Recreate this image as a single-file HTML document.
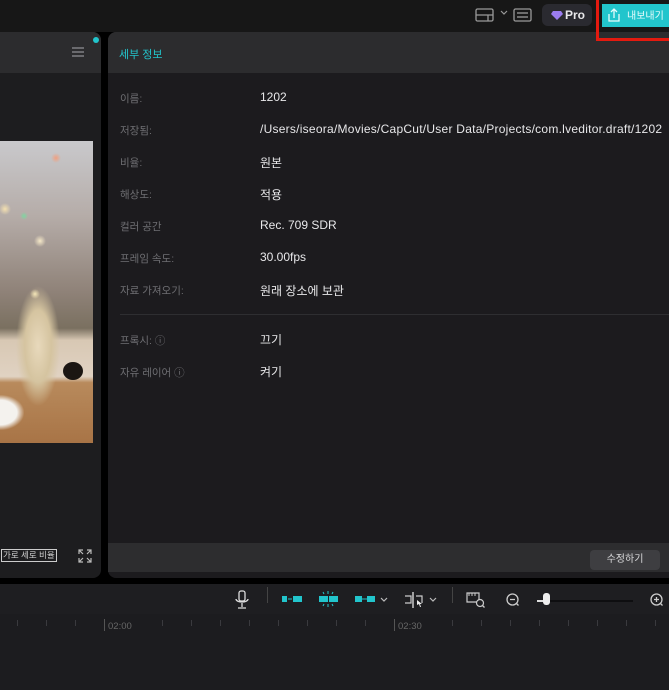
<!DOCTYPE html>
<html><head><meta charset="utf-8"><style>
*{margin:0;padding:0;box-sizing:border-box}
body{width:669px;height:690px;background:#000;position:relative;overflow:hidden;font-family:"Liberation Sans","Noto Sans CJK KR",sans-serif}
.abs{position:absolute}
.lbl{position:absolute;left:120px;font-size:10.5px;color:#6e6e72}
.val{position:absolute;left:260px;font-size:12px;color:#e8e8ea}
.tick{position:absolute;top:620px;width:1px;height:6px;background:#3a3a3e}
</style></head><body>
<!-- top bar -->
<div class="abs" style="left:0;top:0;width:669px;height:32px;background:#171717"></div>
<svg class="abs" style="left:475px;top:8px" width="20" height="15"><rect x="1" y="1" width="17" height="12" rx="1.5" fill="none" stroke="#9a9a9a" stroke-width="1.3"/><line x1="1" y1="7" x2="18" y2="7" stroke="#9a9a9a" stroke-width="1.3"/><line x1="13" y1="7" x2="13" y2="13" stroke="#9a9a9a" stroke-width="1.3"/></svg>
<svg class="abs" style="left:500px;top:10px" width="8" height="6"><path d="M1 1l3 3 3-3" fill="none" stroke="#999" stroke-width="1.2"/></svg>
<svg class="abs" style="left:513px;top:8px" width="20" height="15"><rect x="1" y="1" width="17" height="12" rx="1.5" fill="none" stroke="#9a9a9a" stroke-width="1.3"/><line x1="4" y1="5" x2="15" y2="5" stroke="#9a9a9a" stroke-width="1.3"/><line x1="4" y1="9" x2="15" y2="9" stroke="#9a9a9a" stroke-width="1.3"/></svg>
<div class="abs" style="left:542px;top:4px;width:50px;height:22px;border-radius:6px;background:#2a2a30;color:#e8e8ea;font-size:12px;font-weight:bold;line-height:22px;padding-left:23px">Pro</div>
<svg class="abs" style="left:551px;top:11px" width="12" height="9"><path d="M2 0h8l2 3-6 6-6-6z" fill="#9b7cf0"/></svg>
<div class="abs" style="left:599px;top:3px;width:70px;height:34px;background:#171717"></div>
<div class="abs" style="left:602px;top:4px;width:67px;height:23px;background:#22c5cc"></div>
<svg class="abs" style="left:606px;top:7px" width="16" height="16"><path d="M3 7v7h10V7M8 11V2M5 5l3-3 3 3" fill="none" stroke="#e8fcfc" stroke-width="1.3"/></svg>
<div class="abs" style="left:627px;top:7px;font-size:10px;color:#e8fcfc">내보내기</div>
<!-- left panel -->
<div class="abs" style="left:0;top:32px;width:101px;height:546px;background:#1d1d1f;border-radius:0 8px 8px 0;overflow:hidden">
 <div style="height:41px;background:#2c2c2e"></div>
</div>
<div class="abs" style="left:72px;top:47px;width:12px;height:1.5px;background:#6a6a6e;box-shadow:0 4px 0 #6a6a6e,0 8px 0 #6a6a6e"></div>
<div class="abs" style="left:93px;top:37px;width:6px;height:6px;border-radius:50%;background:#22c5cc"></div>
<div class="abs" style="left:0;top:141px;width:93px;height:302px;background:
radial-gradient(circle at 40px 100px,#f5e8c8 0,transparent 6px),
radial-gradient(circle at 56px 17px,#f0a080 0,transparent 5px),
radial-gradient(circle at 5px 68px,#f4e0b0 0,transparent 6px),
radial-gradient(circle at 24px 75px,#7fd6a0 0,transparent 4px),
radial-gradient(circle at 35px 153px,#f4e6b8 0,transparent 5px),
radial-gradient(ellipse 22px 60px at 38px 205px,#e8d9bc 0,#d5c4a0 60%,transparent 100%),
linear-gradient(180deg,#c9c9cc 0,#b5aca8 25%,#8f8278 50%,#7a7060 62%,#d8c8b4 66%,#e0d2c2 78%,#b88a5c 80%,#a87446 100%)"></div>
<div class="abs" style="left:0;top:395px;width:24px;height:35px;background:radial-gradient(ellipse at 0 50%,#f4f2ee 50%,transparent 72%)"></div>
<div class="abs" style="left:63px;top:362px;width:20px;height:18px;border-radius:50%;background:#1b1612"></div>
<div class="abs" style="left:1px;top:549px;font-size:8.5px;color:#ccc;border:1px solid #ccc;padding:0 1px;line-height:11px">가로 세로 비율</div>
<svg class="abs" style="left:78px;top:549px" width="14" height="14"><path d="M1 5V1h4M9 1h4v4M13 9v4H9M5 13H1V9M1 1l4 4M13 1L9 5M13 13L9 9M1 13l4-4" fill="none" stroke="#bbb" stroke-width="1.2"/></svg>
<!-- right panel -->
<div class="abs" style="left:108px;top:32px;width:561px;height:546px;background:#1c1b1e;border-radius:8px 0 0 8px;overflow:hidden">
 <div style="height:41px;background:#2c2c2e"></div>
</div>
<div class="abs" style="left:119px;top:46px;font-size:11px;color:#22c5cc">세부 정보</div>
<div class="lbl" style="top:91px">이름:</div><div class="val" style="top:90px">1202</div>
<div class="lbl" style="top:123px">저장됨:</div><div class="val" style="top:122px;letter-spacing:0.25px">/Users/iseora/Movies/CapCut/User Data/Projects/com.lveditor.draft/1202</div>
<div class="lbl" style="top:155px">비율:</div><div class="val" style="top:154px">원본</div>
<div class="lbl" style="top:187px">해상도:</div><div class="val" style="top:186px">적용</div>
<div class="lbl" style="top:219px">컬러 공간</div><div class="val" style="top:218px">Rec. 709 SDR</div>
<div class="lbl" style="top:251px">프레임 속도:</div><div class="val" style="top:250px">30.00fps</div>
<div class="lbl" style="top:283px">자료 가져오기:</div><div class="val" style="top:282px">원래 장소에 보관</div>
<div class="abs" style="left:120px;top:314px;width:549px;height:1px;background:#2e2e31"></div>
<div class="lbl" style="top:333px">프록시: ⓘ</div><div class="val" style="top:331px">끄기</div>
<div class="lbl" style="top:365px">자유 레이어 ⓘ</div><div class="val" style="top:363px">켜기</div>
<div class="abs" style="left:108px;top:543px;width:561px;height:29px;background:#2d2d2f"></div>
<div class="abs" style="left:590px;top:550px;width:70px;height:20px;border-radius:4px;background:#3e3e41;color:#d8d8da;font-size:10px;text-align:center;line-height:20px">수정하기</div>
<!-- red box on top -->
<div class="abs" style="left:596px;top:-3px;width:80px;height:44px;border:3px solid #e41a0f"></div>
<!-- timeline -->
<div class="abs" style="left:0;top:584px;width:669px;height:106px;background:#1c1c1f"></div>
<div class="abs" style="left:0;top:584px;width:669px;height:30px;background:#1e1e21"></div>
<svg class="abs" style="left:234px;top:590px" width="16" height="20"><rect x="5" y="1" width="6" height="10" rx="2" fill="none" stroke="#ddd" stroke-width="1.3"/><path d="M2 9c0 4 12 4 12 0M8 13v4M4 18h8" fill="none" stroke="#ddd" stroke-width="1.3"/></svg>
<div class="abs" style="left:267px;top:587px;width:1px;height:16px;background:#444"></div>
<svg class="abs" style="left:281px;top:594px" width="22" height="10"><rect x="1" y="2" width="5" height="6" fill="#22c5cc"/><rect x="12" y="2" width="9" height="6" fill="#22c5cc"/><path d="M7 5h4" stroke="#22c5cc"/></svg>
<svg class="abs" style="left:318px;top:590px" width="22" height="18"><rect x="1" y="6" width="9" height="6" fill="#22c5cc"/><rect x="11" y="6" width="9" height="6" fill="#22c5cc"/><path d="M10 1v3M10 14v3M5 2l1 2M15 2l-1 2M5 16l1-2M15 16l-1-2" stroke="#22c5cc"/></svg>
<svg class="abs" style="left:354px;top:594px" width="22" height="10"><rect x="1" y="2" width="7" height="6" fill="#22c5cc"/><rect x="13" y="2" width="8" height="6" fill="#22c5cc"/><path d="M8 5h5" stroke="#22c5cc"/></svg>
<svg class="abs" style="left:380px;top:597px" width="8" height="6"><path d="M1 1l3 3 3-3" fill="none" stroke="#bbb" stroke-width="1.2"/></svg>
<svg class="abs" style="left:404px;top:591px" width="22" height="18"><path d="M1 5h6v7H1M12 5h6v7" fill="none" stroke="#ccc" stroke-width="1.2"/><path d="M9 1v16" stroke="#ccc" stroke-width="1.5"/><path d="M13 9l5 4-2 0 1 3-1 0-1-3-2 1z" fill="#eee"/></svg>
<svg class="abs" style="left:429px;top:597px" width="8" height="6"><path d="M1 1l3 3 3-3" fill="none" stroke="#bbb" stroke-width="1.2"/></svg>
<div class="abs" style="left:452px;top:587px;width:1px;height:16px;background:#444"></div>
<svg class="abs" style="left:466px;top:591px" width="20" height="18"><path d="M1 2h12v9H1z" fill="none" stroke="#ccc" stroke-width="1.2"/><path d="M3 2v3M6 2v3M9 2v3" stroke="#ccc"/><circle cx="14" cy="12" r="3.5" fill="#1e1e21" stroke="#ccc" stroke-width="1.2"/><path d="M16.5 14.5l2 2" stroke="#ccc" stroke-width="1.3"/></svg>
<svg class="abs" style="left:505px;top:592px" width="16" height="16"><circle cx="7.5" cy="7.5" r="5.5" fill="none" stroke="#ccc" stroke-width="1.3"/><path d="M5 7.5h5M11.5 11.5l2 2" stroke="#ccc" stroke-width="1.3"/></svg>
<div class="abs" style="left:537px;top:600px;width:96px;height:2px;background:#0e0e10"></div>
<div class="abs" style="left:537px;top:600px;width:8px;height:2px;background:#ddd"></div>
<div class="abs" style="left:543px;top:593px;width:7px;height:12px;border-radius:3px;background:#eee"></div>
<svg class="abs" style="left:649px;top:592px" width="16" height="16"><circle cx="7.5" cy="7.5" r="5.5" fill="none" stroke="#ccc" stroke-width="1.3"/><path d="M5 7.5h5M7.5 5v5M11.5 11.5l2 2" stroke="#ccc" stroke-width="1.3"/></svg>
<div class="tick" style="left:17px"></div><div class="tick" style="left:46px"></div><div class="tick" style="left:75px"></div>
<div class="abs" style="left:104px;top:619px;width:1px;height:12px;background:#555"></div>
<div class="abs" style="left:108px;top:621px;font-size:9.5px;color:#666">02:00</div>
<div class="tick" style="left:162px"></div><div class="tick" style="left:191px"></div><div class="tick" style="left:220px"></div><div class="tick" style="left:249px"></div><div class="tick" style="left:278px"></div><div class="tick" style="left:307px"></div><div class="tick" style="left:336px"></div><div class="tick" style="left:365px"></div>
<div class="abs" style="left:394px;top:619px;width:1px;height:12px;background:#555"></div>
<div class="abs" style="left:398px;top:621px;font-size:9.5px;color:#666">02:30</div>
<div class="tick" style="left:452px"></div><div class="tick" style="left:481px"></div><div class="tick" style="left:510px"></div><div class="tick" style="left:539px"></div><div class="tick" style="left:568px"></div><div class="tick" style="left:597px"></div><div class="tick" style="left:626px"></div><div class="tick" style="left:655px"></div>
</body></html>
